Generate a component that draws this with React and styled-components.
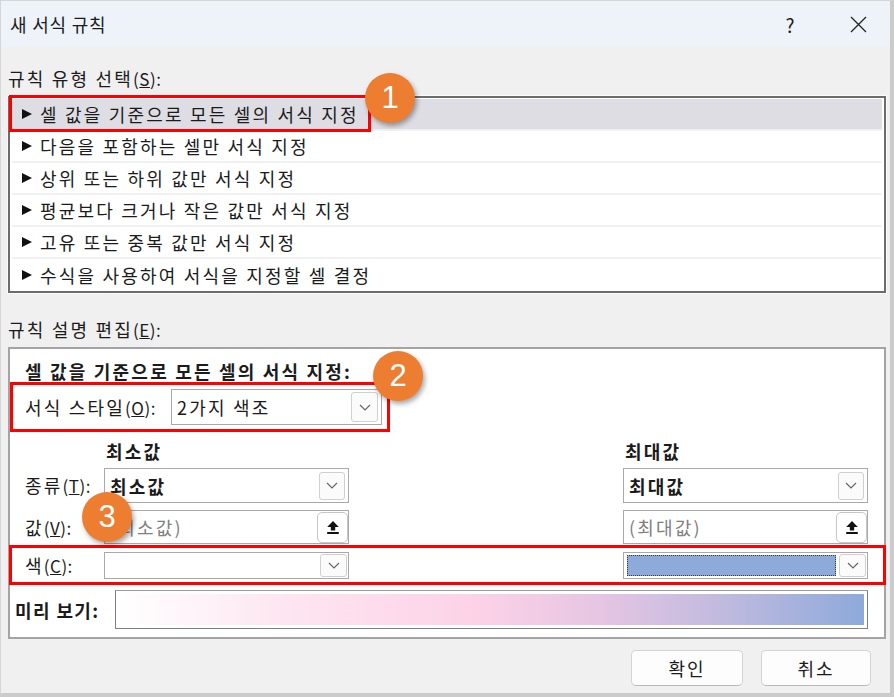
import React from 'react';
import styled, { createGlobalStyle } from 'styled-components';

const GlobalStyle = createGlobalStyle`
  body {
    margin: 0;
    background: #ffffff;
    font-family: "Noto Sans CJK KR", "Noto Sans", sans-serif;
  }
`;

const Window = styled.div`
  position: relative;
  box-sizing: border-box;
  width: 894px;
  height: 697px;
  background: #f0f0f0;
  border-left: 1px solid #d6d6d6;
  border-top: 1px solid #d6d6d6;
  border-right: 4px solid #cbcbcb;
  border-bottom: 4px solid #cbcbcb;
  color: #1b1b1b;
  font-size: 18px;
  letter-spacing: 2.2px;
  overflow: hidden;
`;

const TitleBar = styled.div`
  display: flex;
  align-items: center;
  height: 46px;
  padding: 0 9px;
  background: #eef3f9;
`;

const Title = styled.div`
  flex: 1;
  line-height: 20px;
  letter-spacing: 0.8px;
`;

const TitleButton = styled.div`
  display: flex;
  align-items: center;
  justify-content: center;
  width: 46px;
  height: 46px;
  font-size: 19px;
  letter-spacing: 0;
  margin-left: ${p => p.gap || 0}px;
`;

const Content = styled.div`
  padding: 0 4px 0 7px;
`;

const SectionLabel = styled.div`
  line-height: 20px;
  margin-top: ${p => p.top}px;
`;

const Key = styled.span`
  font-size: 17px;
  letter-spacing: 0.5px;
`;

const RuleList = styled.div`
  box-sizing: border-box;
  height: 197px;
  margin-top: 7px;
  padding: 1px 2px;
  background: #ffffff;
  border: 2px solid #6c6c6c;
  box-shadow: 0 0 0 1px #fbfbfb;
`;

const RuleRow = styled.div`
  display: flex;
  align-items: center;
  box-sizing: border-box;
  height: 32px;
  padding-left: 10px;
  background: ${p => (p.selected ? '#dedde3' : 'transparent')};
  border-bottom: ${p => (p.last ? 'none' : '2px solid #f1f1f1')};
`;

const Arrow = styled.span`
  width: 0;
  height: 0;
  margin-right: 8px;
  border-left: 10px solid #111;
  border-top: 5.5px solid transparent;
  border-bottom: 5.5px solid transparent;
`;

const Panel = styled.div`
  box-sizing: border-box;
  height: 292px;
  margin-top: 7px;
  padding-top: 12px;
  background: #ffffff;
  border: 2px solid #a4a4a4;
`;

const Heading = styled.div`
  padding-left: 15px;
  line-height: 21px;
  font-weight: 700;
  white-space: nowrap;
`;

const StyleRow = styled.div`
  display: flex;
  align-items: center;
  box-sizing: border-box;
  width: 380px;
  height: 50px;
  padding: 0 5px 0 12px;
  border: 3px solid #ff0000;
`;

const FormRow = styled.div`
  display: grid;
  grid-template-columns: 79px 245px 1fr 245px;
  align-items: center;
  height: ${p => p.h}px;
  margin-top: ${p => p.top}px;
  padding: 0 16px 0 15px;
`;

const ColorRow = styled(FormRow)`
  box-sizing: border-box;
  margin: 1px -2px 0 -1px;
  padding: 0 15px 0 13px;
  border: 3px solid #ff0000;
`;

const ColumnHead = styled.div`
  grid-column: ${p => p.col};
  padding-left: 2px;
  font-weight: 700;
  line-height: 20px;
`;

const Label = styled.div`
  line-height: 20px;
  white-space: nowrap;
`;

const Select = styled.div`
  display: flex;
  align-items: center;
  box-sizing: border-box;
  grid-column: ${p => p.col || 'auto'};
  width: ${p => p.w}px;
  height: ${p => p.h}px;
  margin-left: ${p => (p.push ? 'auto' : '0')};
  padding: 0 ${p => p.pr ?? 3}px 0 5px;
  background: #ffffff;
  border: 1px solid #a9a9a9;
`;

const SelectText = styled.div`
  flex: 1;
  font-weight: ${p => (p.bold ? 700 : 400)};
  color: ${p => (p.muted ? '#808080' : 'inherit')};
  white-space: nowrap;
`;

const DropButton = styled.div`
  display: flex;
  align-items: center;
  justify-content: center;
  box-sizing: border-box;
  width: ${p => p.w || 26}px;
  height: ${p => p.h || 28}px;
  background: #fbfbfb;
  border: 1px solid #d0d0d0;
  border-radius: 3px;
`;

const UpButton = styled.div`
  display: flex;
  align-items: center;
  justify-content: center;
  box-sizing: border-box;
  width: 31px;
  height: 31px;
  margin-right: -1px;
  background: #ffffff;
  border: 1px solid #c6c6c6;
  border-radius: 5px;
`;

const Swatch = styled.div`
  flex: 1;
  align-self: stretch;
  margin: 2px 3px 2px -2px;
  background: #8eaadb;
  border: 1px dotted #3a3a3a;
`;

const PreviewRow = styled.div`
  display: flex;
  align-items: center;
  height: 39px;
  margin-top: 5px;
  padding: 0 16px 0 5px;
`;

const PreviewLabel = styled.div`
  width: 100px;
  font-weight: 700;
  line-height: 20px;
  letter-spacing: 1.4px;
  white-space: nowrap;
`;

const PreviewBox = styled.div`
  box-sizing: border-box;
  flex: 1;
  height: 39px;
  padding: 3px;
  background: #ffffff;
  border: 1px solid #7f7f7f;
  border-top-color: #9a9a9a;
`;

const Gradient = styled.div`
  height: 100%;
  background: linear-gradient(
    to right,
    #ffffff 0%,
    #fde6f1 22%,
    #fcd2e7 48%,
    #e6c6e3 64%,
    #c3bbde 80%,
    #8eaadb 100%
  );
`;

const Footer = styled.div`
  display: flex;
  justify-content: flex-end;
  gap: 18px;
  margin-top: 11px;
  padding-right: 15px;
`;

const Button = styled.button`
  box-sizing: border-box;
  width: ${p => p.w}px;
  height: 36px;
  font: inherit;
  letter-spacing: 2px;
  color: #1b1b1b;
  background: #fdfdfd;
  border: 1px solid #d3d3d3;
  border-bottom-color: #b9b9b9;
  border-radius: 5px;
`;

const Callout = styled.div`
  position: absolute;
  left: ${p => p.x - 26}px;
  top: ${p => p.y - 26}px;
  z-index: 2;
  display: flex;
  align-items: center;
  justify-content: center;
  width: 50px;
  height: 50px;
  border-radius: 50%;
  background: #ed7d31;
  color: #ffffff;
  font-family: "Liberation Sans", Arial, sans-serif;
  font-size: 31px;
  letter-spacing: 0;
  box-shadow: 2px 3px 5px rgba(0, 0, 0, 0.35);
`;

const RedFrame = styled.div`
  position: absolute;
  left: 8px;
  top: 94px;
  width: 362px;
  height: 37px;
  box-sizing: border-box;
  border: 3px solid #ff0000;
  z-index: 1;
`;

const Chevron = () => (
  <svg width="12" height="7" viewBox="0 0 12 7">
    <path d="M1 1 L6 6 L11 1" fill="none" stroke="#666" strokeWidth="1.2" />
  </svg>
);

const UpIcon = () => (
  <svg width="14" height="15" viewBox="0 0 14 15">
    <path d="M7 1 L12.8 7 H9.2 V10.5 H4.8 V7 H1.2 Z" fill="#111" />
    <rect x="1.2" y="12" width="11.6" height="2" fill="#111" />
  </svg>
);

const CloseIcon = () => (
  <svg width="17" height="17" viewBox="0 0 17 17">
    <path d="M1 1 L16 16 M16 1 L1 16" stroke="#222" strokeWidth="1.3" />
  </svg>
);

const rules = [
  '셀 값을 기준으로 모든 셀의 서식 지정',
  '다음을 포함하는 셀만 서식 지정',
  '상위 또는 하위 값만 서식 지정',
  '평균보다 크거나 작은 값만 서식 지정',
  '고유 또는 중복 값만 서식 지정',
  '수식을 사용하여 서식을 지정할 셀 결정',
];

const App = () => (
  <Window>
    <GlobalStyle />
    <TitleBar>
      <Title>새 서식 규칙</Title>
      <TitleButton>?</TitleButton>
      <TitleButton gap={22}>
        <CloseIcon />
      </TitleButton>
    </TitleBar>

    <Content>
      <SectionLabel top={21}>
        규칙 유형 선택<Key>(<u>S</u>):</Key>
      </SectionLabel>
      <RuleList>
        {rules.map((rule, i) => (
          <RuleRow key={rule} selected={i === 0} last={i === rules.length - 1}>
            <Arrow />
            {rule}
          </RuleRow>
        ))}
      </RuleList>

      <SectionLabel top={26}>
        규칙 설명 편집<Key>(<u>E</u>):</Key>
      </SectionLabel>
      <Panel>
        <Heading>셀 값을 기준으로 모든 셀의 서식 지정:</Heading>
        <StyleRow>
          <Label>
            서식 스타일<Key>(<u>O</u>):</Key>
          </Label>
          <Select w={211} h={36} push>
            <SelectText>2가지 색조</SelectText>
            <DropButton w={27} h={30}>
              <Chevron />
            </DropButton>
          </Select>
        </StyleRow>

        <FormRow h={20} top={9}>
          <ColumnHead col={2}>최소값</ColumnHead>
          <ColumnHead col={4}>최대값</ColumnHead>
        </FormRow>

        <FormRow h={35} top={7}>
          <Label>
            종류<Key>(<u>T</u>):</Key>
          </Label>
          <Select w={245} h={35}>
            <SelectText bold>최소값</SelectText>
            <DropButton>
              <Chevron />
            </DropButton>
          </Select>
          <div />
          <Select w={245} h={35}>
            <SelectText bold>최대값</SelectText>
            <DropButton>
              <Chevron />
            </DropButton>
          </Select>
        </FormRow>

        <FormRow h={34} top={7}>
          <Label>
            값<Key>(<u>V</u>):</Key>
          </Label>
          <Select w={245} h={34} pr={1}>
            <SelectText muted>(최소값)</SelectText>
            <UpButton>
              <UpIcon />
            </UpButton>
          </Select>
          <div />
          <Select w={245} h={34} pr={1}>
            <SelectText muted>(최대값)</SelectText>
            <UpButton>
              <UpIcon />
            </UpButton>
          </Select>
        </FormRow>

        <ColorRow h={40}>
          <Label>
            색<Key>(<u>C</u>):</Key>
          </Label>
          <Select w={245} h={27} pr={1}>
            <SelectText />
            <DropButton w={27} h={23}>
              <Chevron />
            </DropButton>
          </Select>
          <div />
          <Select w={245} h={27} pr={1}>
            <Swatch />
            <DropButton w={27} h={23}>
              <Chevron />
            </DropButton>
          </Select>
        </ColorRow>

        <PreviewRow>
          <PreviewLabel>미리 보기:</PreviewLabel>
          <PreviewBox>
            <Gradient />
          </PreviewBox>
        </PreviewRow>
      </Panel>

      <Footer>
        <Button w={112}>확인</Button>
        <Button w={110}>취소</Button>
      </Footer>
    </Content>

    <RedFrame />
    <Callout x={390} y={98}>1</Callout>
    <Callout x={398} y={376}>2</Callout>
    <Callout x={107} y={517}>3</Callout>
  </Window>
);

export default App;
